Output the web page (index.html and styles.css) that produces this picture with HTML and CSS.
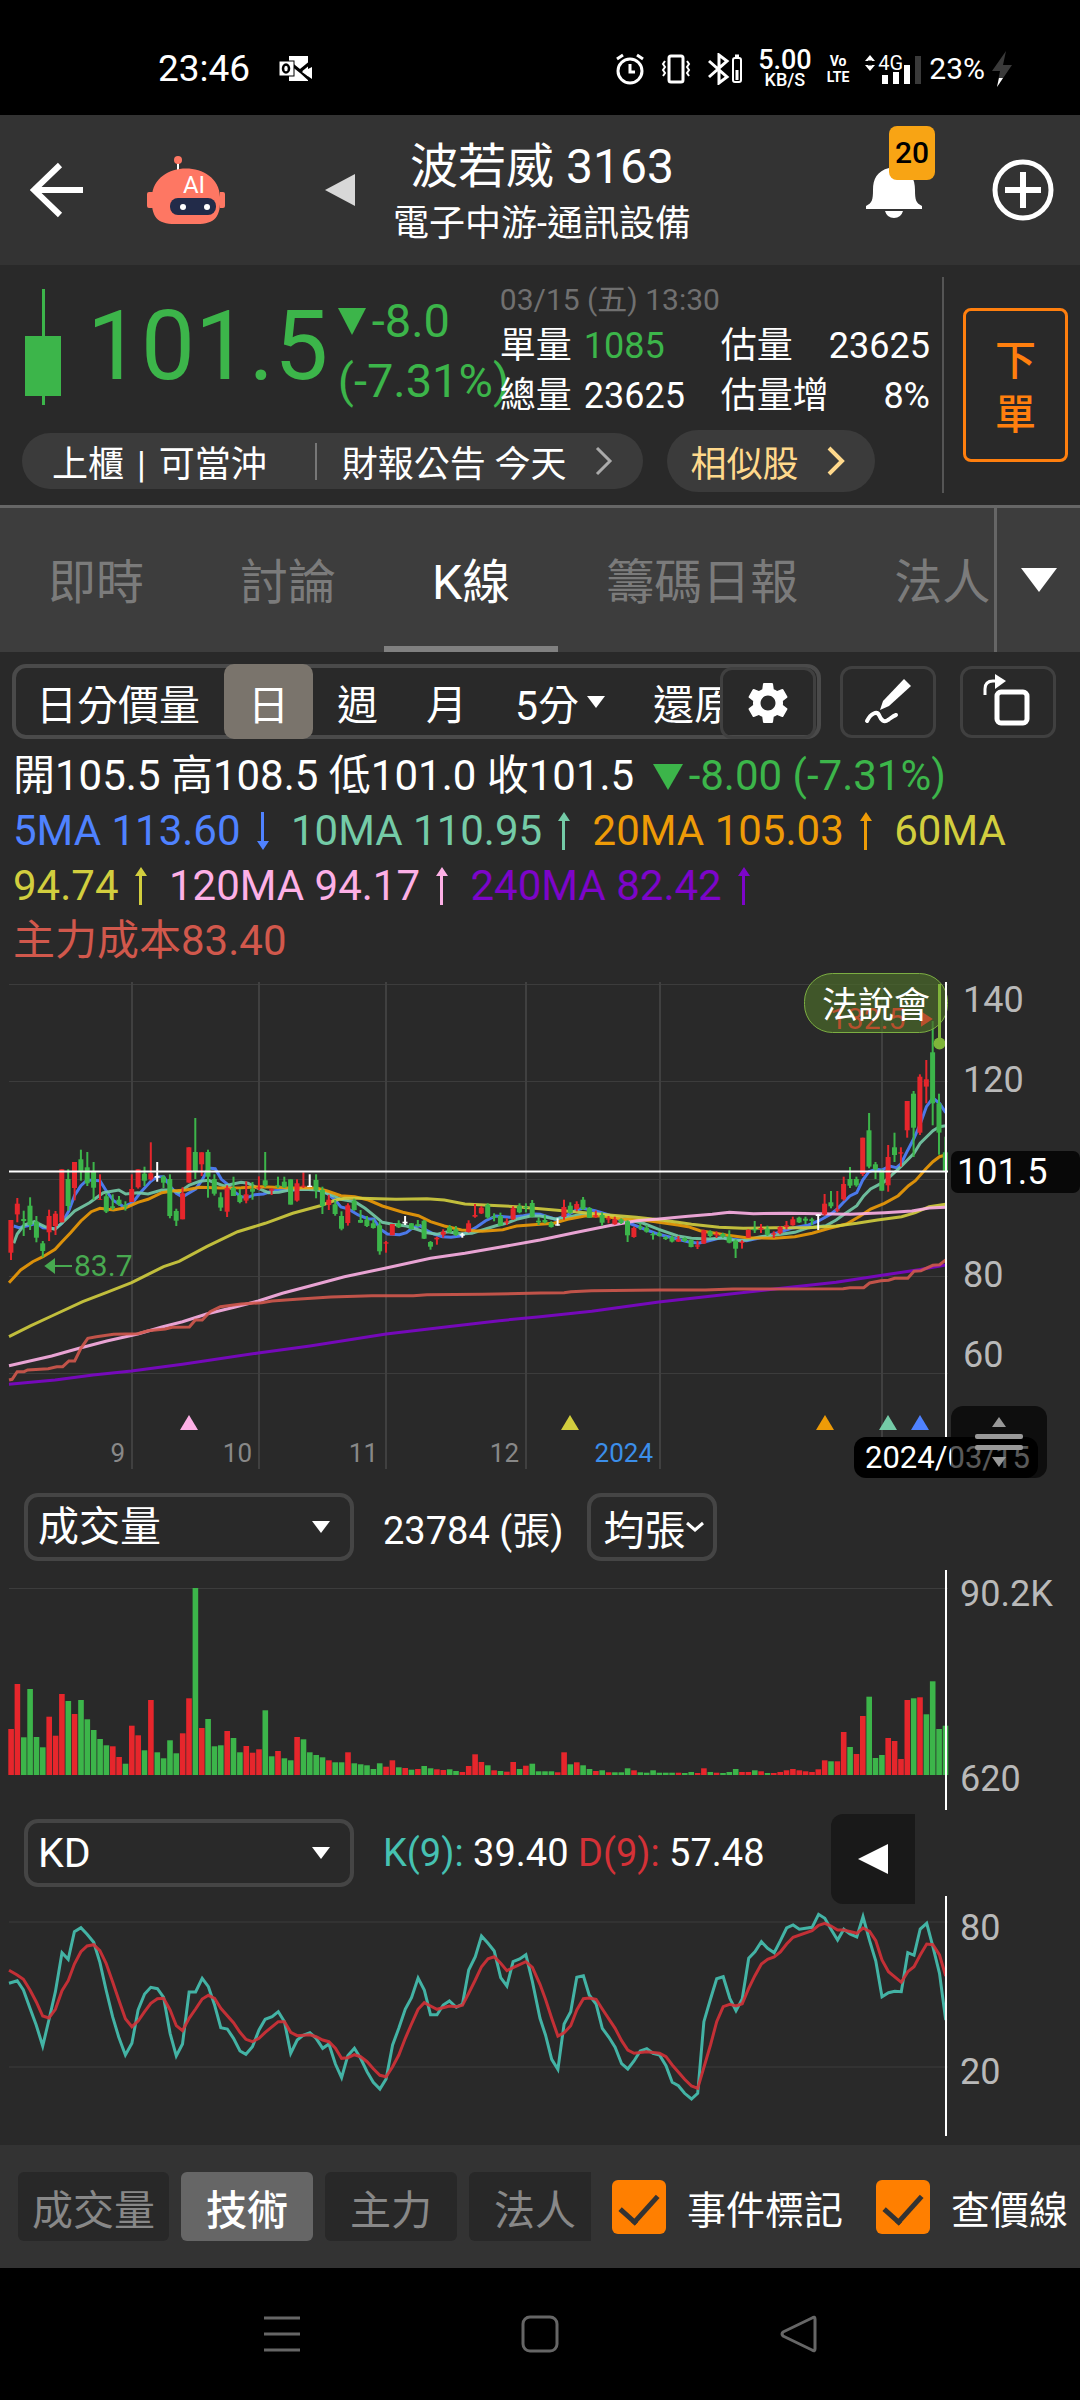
FILE: index.html
```html
<!DOCTYPE html>
<html lang="zh-Hant">
<head>
<meta charset="utf-8">
<meta name="viewport" content="width=device-width, initial-scale=1">
<title>波若威 3163</title>
<link rel="stylesheet" href="styles.css">
</head>
<body>
<div class="status">
  <span class="clock">23:46</span>
  <svg class="mail" width="34" height="28" viewBox="0 0 34 28"><path d="M11 1h19v25H11z" fill="#fff"/><path d="M12 8l10 8 11-9M22 16l11 10" stroke="#000" stroke-width="3" fill="none"/><path d="M34 12v12l-10-7z" fill="#fff"/><rect x="1" y="6" width="15" height="15" fill="#fff" stroke="#000"/><ellipse cx="8" cy="13.500" rx="3" ry="4" fill="none" stroke="#000" stroke-width="2.500"/></svg>
  <div class="status-icons">
    <svg width="30" height="32" viewBox="0 0 30 32" fill="none" stroke="#fff" stroke-width="3"><circle cx="15" cy="18" r="12"/><path d="M15 11v8h5M2 6l6-4M28 6l-6-4"/></svg>
    <svg width="32" height="32" viewBox="0 0 32 32" fill="none" stroke="#fff" stroke-width="3"><rect x="9" y="3" width="14" height="26" rx="2"/><path d="M5 8l-2 3 2 3-2 3 2 3-2 3M27 8l2 3-2 3 2 3-2 3 2 3" stroke-width="2"/></svg>
    <svg width="36" height="32" viewBox="0 0 36 32" fill="none" stroke="#fff" stroke-width="3"><path d="M2 8l18 16-8 6V2l8 6L2 24"/><rect x="26" y="5" width="8" height="24" rx="2" stroke-width="2"/><path d="M28 3h4M30 17v10"/></svg>
    <span class="speed"><b>5.00</b><small>KB/S</small></span>
    <span class="volte"><b>Vo</b><b>LTE</b></span>
    <span class="signal"><svg width="58" height="32" viewBox="0 0 58 32"><path d="M1 8l5-6 5 6zM1 12l5 6 5-6z" fill="#fff"/><path d="M4 8h4M4 12h4" stroke="#000"/><path d="M21 31v-9M32 31V19M43 31V12" stroke="#fff" stroke-width="6"/><path d="M54 31V3" stroke="#3a3a3a" stroke-width="6"/></svg><i>4G</i></span>
    <span class="battery">23%</span>
    <svg width="20" height="36" viewBox="0 0 20 36"><path d="M14 0L0 20h8L5 36 20 14h-9z" fill="#3a3a3a"/><path d="M7 27h4L5 36z" fill="#fff"/></svg>
  </div>
</div>

<header class="header">
  <div class="side">
  <button class="icon-btn back" aria-label="返回"><svg width="54" height="56" viewBox="0 0 54 56" fill="none" stroke="#fff" stroke-width="6"><path d="M53 28H5M30 3L4 28l26 25"/></svg></button>
  <button class="icon-btn robot" aria-label="AI 助理"><svg width="80" height="72" viewBox="0 0 80 72"><path d="M32 8v14" stroke="#fff" stroke-width="2"/><circle cx="32" cy="6" r="4" fill="#fe7763"/><path d="M1 40q0-2 2-2h4v16H3q-2 0-2-2zM79 40q0-2-2-2h-3v16h3q2 0 2-2z" fill="#fe7763"/><path d="M6 43C7 5 73 5 74 43c1 20-5 27-23 27H29C11 70 5 63 6 43z" fill="#fe7763"/><rect x="24" y="44" width="46" height="17" rx="8" fill="#222b49"/><circle cx="37" cy="53" r="3" fill="#fff"/><circle cx="61" cy="53" r="3" fill="#fff"/><text x="48" y="39" text-anchor="middle" font-size="24" fill="#fff">AI</text></svg></button>
  <button class="icon-btn prev" aria-label="上一檔"><svg width="30" height="32" viewBox="0 0 30 32"><path d="M30 0v32L0 16z" fill="#d8d8d8"/></svg></button>
  </div>
  <div class="title"><h1>波若威 3163</h1><p>電子中游-通訊設備</p></div>
  <div class="side right">
  <button class="icon-btn bell" aria-label="通知"><svg width="58" height="56" viewBox="0 0 58 56"><path d="M29 1c3 0 5 2 5 5 12 3 16 11 16 22 0 10 1 13 7 16v3H1v-3c6-3 7-6 7-16C8 17 12 9 24 6c0-3 2-5 5-5zM20 49h18q-2 7-9 7t-9-7z" fill="#fff"/></svg><span class="badge">20</span></button>
  <button class="icon-btn" aria-label="新增"><svg width="62" height="62" viewBox="0 0 62 62" fill="none" stroke="#fff"><circle cx="31" cy="31" r="28" stroke-width="5"/><path d="M31 13v36M13 31h36" stroke-width="6"/></svg></button>
  </div>
</header>

<section class="quote">
  <div class="quote-main">
    <div class="prices">
      <svg class="mini" width="36" height="116" viewBox="0 0 36 116" fill="#3cb54a"><path d="M17 0h3v116h-3zM0 47h36v60H0z"/></svg>
      <strong class="last">101.5</strong>
      <div class="change"><span><svg width="28" height="27" viewBox="0 0 28 27"><path d="M0 0h28L14 27z" fill="#3cb54a"/></svg>-8.0</span><span>(-7.31%)</span></div>
      <div class="info">
        <time>03/15 (五) 13:30</time>
        <dl><dt>單量</dt><dd class="down">1085</dd><dt>估量</dt><dd class="end">23625</dd><dt>總量</dt><dd>23625</dd><dt>估量增</dt><dd class="end">8%</dd></dl>
      </div>
    </div>
    <div class="pills">
      <button class="pill"><span>上櫃 <b>|</b> 可當沖</span><i></i><span>財報公告 今天</span><svg width="18" height="30" viewBox="0 0 18 30" fill="none" stroke="#aaa" stroke-width="3"><path d="M2 2l13 13L2 28"/></svg></button>
      <button class="pill similar"><span>相似股</span><svg width="18" height="30" viewBox="0 0 18 30" fill="none" stroke="#ffd98c" stroke-width="4"><path d="M2 2l13 13L2 28"/></svg></button>
    </div>
  </div>
  <div class="order"><button>下<br>單</button></div>
</section>

<nav class="tabs">
  <div class="tab-list"><a href="#">即時</a><a href="#">討論</a><a href="#" class="on" aria-current="page">K線</a><a href="#">籌碼日報</a><a href="#">法人</a></div>
  <button class="tab-more" aria-label="更多"><svg width="36" height="24" viewBox="0 0 36 24"><path d="M0 0h36L18 24z" fill="#fff"/></svg></button>
</nav>

<div class="toolbar">
  <div class="periods">
    <div class="period-list"><button class="first">日分價量</button><button class="on">日</button><button>週</button><button>月</button><button>5分<svg width="18" height="12" viewBox="0 0 18 12"><path d="M0 0h18L9 12z" fill="#fff"/></svg></button><button>還原</button></div>
    <button class="tool gear" aria-label="設定"><svg width="50" height="50" viewBox="0 0 24 24" fill="#fff"><path d="M19.140 12.940c.040-.300.060-.610.060-.940s-.020-.640-.070-.940l2.030-1.580c.180-.140.230-.410.120-.610l-1.920-3.320c-.120-.220-.370-.290-.590-.220l-2.390.960c-.500-.380-1.030-.700-1.620-.940l-.360-2.540c-.040-.240-.240-.410-.480-.410h-3.840c-.240 0-.430.170-.470.410l-.360 2.540c-.590.240-1.130.570-1.620.940l-2.390-.960c-.220-.080-.470 0-.590.220L2.740 8.870c-.120.210-.080.470.120.610l2.030 1.580c-.050.300-.090.630-.090.940s.020.640.070.940l-2.030 1.580c-.180.140-.230.410-.120.610l1.920 3.320c.120.220.370.290.590.220l2.390-.960c.500.380 1.030.700 1.620.940l.360 2.540c.050.240.240.410.480.410h3.840c.240 0 .440-.170.470-.410l.360-2.540c.590-.240 1.130-.560 1.620-.940l2.390.960c.220.080.470 0 .590-.220l1.920-3.320c.120-.220.070-.470-.120-.610l-2.010-1.580zM12 15.600c-1.980 0-3.600-1.620-3.600-3.600s1.620-3.600 3.600-3.600 3.600 1.620 3.600 3.600-1.620 3.600-3.600 3.600z"/></svg></button>
  </div>
  <button class="tool" aria-label="畫線"><svg width="48" height="48" viewBox="0 0 48 48"><path d="M40 1l7 7-22 20-9 4 3-9z" fill="#fff"/><path d="M3 43c4-8 10-10 12-6 2 5 5 8 9 5 3-2 5-4 8-5" fill="none" stroke="#fff" stroke-width="4" stroke-linecap="round"/></svg></button>
  <button class="tool" aria-label="旋轉"><svg width="50" height="56" viewBox="0 0 50 56" fill="none" stroke="#fff"><rect x="14" y="18" width="30" height="31" rx="4" stroke-width="5"/><path d="M2 21V15q0-8 8-8h4" stroke-width="3"/><path d="M12 0l11 7-11 8z" fill="#fff" stroke="none"/></svg></button>
</div>

<section class="legend">
  <p>開105.5 高108.5 低101.0 收101.5 <span class="down"><svg class="tri" width="30" height="26" viewBox="0 0 30 26"><path d="M0 0h30L15 26z" fill="#3cb54a"/></svg>-8.00 (-7.31%)</span></p>
  <p>
    <span class="ma5">5MA 113.60<svg class="arrow" width="14" height="38" viewBox="0 0 14 38"><path d="M5 0h3v29h5L7 38 1 29h4z"/></svg></span>
    <span class="ma10">10MA 110.95<svg class="arrow" width="14" height="38" viewBox="0 0 14 38"><path d="M5 38h3V9h5L7 0 1 9h4z"/></svg></span>
    <span class="ma20">20MA 105.03<svg class="arrow" width="14" height="38" viewBox="0 0 14 38"><path d="M5 38h3V9h5L7 0 1 9h4z"/></svg></span>
    <span class="ma60">60MA 94.74<svg class="arrow" width="14" height="38" viewBox="0 0 14 38"><path d="M5 38h3V9h5L7 0 1 9h4z"/></svg></span>
    <span class="ma120">120MA 94.17<svg class="arrow" width="14" height="38" viewBox="0 0 14 38"><path d="M5 38h3V9h5L7 0 1 9h4z"/></svg></span>
    <span class="ma240">240MA 82.42<svg class="arrow" width="14" height="38" viewBox="0 0 14 38"><path d="M5 38h3V9h5L7 0 1 9h4z"/></svg></span>
  </p>
  <p class="cost">主力成本83.40</p>
</section>

<section class="panel">
  <svg class="chart" viewBox="0 968 1080 512" role="img" aria-label="K線圖">
    <path class="grid" d="M9 984.500H948M9 1081.500H948M9 1179.500H948M9 1276.500H948M9 1373.500H948"/>
    <path class="grid months" d="M132 982V1469M259 982V1469M386 982V1469M526 982V1469M660 982V1469M882 982V1469"/>
    <g id="lines"></g>
    <g id="candles"></g>
    <path d="M9 1171.500H948" stroke="#fff" stroke-width="2"/>
    <g class="note low"><text x="74" y="1276">83.7</text><path d="M46 1266h26M54 1260l-8 6 8 6z"/></g>
    <rect x="804.500" y="973.500" width="143" height="59" rx="28" fill="#4a6a2a" fill-opacity=".7" stroke="#7cae42"/>
    <g class="note high"><text x="830" y="1029">132.5</text><path d="M903 1019h26M922 1013l9 6-9 6z"/></g>
    <path d="M939.500 984v60" stroke="#7fb53a" stroke-width="3"/><circle cx="939.500" cy="1043.500" r="6" fill="#7fb53a"/>
    <text class="event" x="876" y="1018" text-anchor="middle">法說會</text>
    <path d="M946 982V1437" stroke="#fff" stroke-width="2"/>
    <g><path fill="#fdb0e6" d="M189 1415l9 15h-18z"/><path fill="#d2ce3e" d="M570 1415l9 15h-18z"/><path fill="#ee9b07" d="M825 1415l9 15h-18z"/><path fill="#74cba7" d="M888 1415l9 15h-18z"/><path fill="#4f82ff" d="M920 1415l9 15h-18z"/></g>
    <g class="month" text-anchor="end"><text x="125" y="1462">9</text><text x="252" y="1462">10</text><text x="378" y="1462">11</text><text x="519" y="1462">12</text><text class="year" x="653" y="1462">2024</text></g>
    <g class="axis"><text x="963" y="1012">140</text><text x="963" y="1092">120</text><text x="963" y="1287">80</text><text x="963" y="1367">60</text></g>
    <rect x="951" y="1151" width="129" height="42" rx="7" fill="#080808"/><text class="tag" x="957" y="1184">101.5</text>
    <rect x="854" y="1437" width="184" height="41" rx="12" fill="#000"/><text class="date" x="865" y="1468">2024/03/15</text>
  </svg>
  <button class="resize" aria-label="調整高度"><svg width="48" height="50" viewBox="0 0 48 50" fill="#989898"><path d="M24 0l7 10H17zM24 50l7-10H17z"/><rect y="17" width="48" height="5" rx="2"/><rect y="28" width="48" height="5" rx="2"/></svg></button>
</section>

<section>
  <div class="indicator vol">
    <label class="pick"><select aria-label="副圖一"><option>成交量</option></select><svg width="18" height="12" viewBox="0 0 18 12"><path d="M0 0h18L9 12z" fill="#fff"/></svg></label>
    <span class="value">23784 (張)</span>
    <button class="avg">均張<svg width="20" height="12" viewBox="0 0 20 12" fill="none" stroke="#fff" stroke-width="3"><path d="M2 2l8 7 8-7"/></svg></button>
  </div>
  <svg class="chart" viewBox="0 1565 1080 245" role="img" aria-label="成交量">
    <path class="grid" d="M9 1588.500H948"/>
    <g id="volumes"></g>
    <path d="M946 1570V1810" stroke="#fff" stroke-width="2"/>
    <g class="axis"><text x="960" y="1606">90.2K</text><text x="960" y="1791">620</text></g>
  </svg>
</section>

<section>
  <div class="indicator kd">
    <label class="pick"><select aria-label="副圖二"><option>KD</option></select><svg width="18" height="12" viewBox="0 0 18 12"><path d="M0 0h18L9 12z" fill="#fff"/></svg></label>
    <span class="value"><span class="k">K(9):</span> 39.40 <span class="d">D(9):</span> 57.48</span>
    <button class="drawer" aria-label="展開"><svg width="30" height="30" viewBox="0 0 30 30"><path d="M30 0v30L0 15z" fill="#fff"/></svg></button>
  </div>
  <svg class="chart" viewBox="0 1896 1080 249" role="img" aria-label="KD">
    <path class="grid" d="M9 1922H948M9 2067H948"/>
    <g id="kd"></g>
    <path d="M946 1896V2136" stroke="#fff" stroke-width="2"/>
    <g class="axis"><text x="960" y="1940">80</text><text x="960" y="2084">20</text></g>
  </svg>
</section>

<footer class="bottom">
  <div class="groups"><button>成交量</button><button class="on">技術</button><button>主力</button><button>法人</button></div>
  <label><input type="checkbox" checked>事件標記</label>
  <label><input type="checkbox" checked>查價線</label>
</footer>

<div class="system">
  <button aria-label="最近"><svg width="38" height="38" viewBox="0 0 38 38" fill="none" stroke="#666" stroke-width="3"><path d="M1 3h36M1 19h36M1 35h36"/></svg></button>
  <button aria-label="主畫面"><svg width="38" height="38" viewBox="0 0 38 38" fill="none" stroke="#666" stroke-width="3"><rect x="2" y="2" width="34" height="34" rx="7"/></svg></button>
  <button aria-label="返回"><svg width="38" height="38" viewBox="0 0 38 38" fill="none" stroke="#666" stroke-width="3" stroke-linejoin="round"><path d="M36 4v30q0 3-3 1L4 21q-2-2 0-4L33 3q3-2 3 1z"/></svg></button>
</div>
<script src="chart.js"></script>
</body>
</html>
```
FILE: styles.css
```css
* { box-sizing: border-box; }
body {
  margin: 0;
  background: #292929;
  color: #fff;
  font-family: Roboto, "Noto Sans CJK TC", sans-serif;
  font-size: 36px;
}
h1, p, dl, dd { margin: 0; font-weight: 400; }
button, select {
  font: inherit;
  color: inherit;
  background: none;
  border: 0;
  padding: 0;
  margin: 0;
}
svg { display: block; flex: none; }
.down { color: #3cb54a; }

.status {
  display: flex;
  align-items: center;
  height: 115px;
  padding: 22px 68px 0 158px;
  background: #000;
}
.clock { font-size: 37px; }
.mail { margin-left: 28px; }
.status-icons { display: flex; align-items: center; gap: 15px; margin-left: auto; }
.speed, .volte { display: flex; flex-direction: column; align-items: center; line-height: 18px; font-weight: 500; }
.speed b { font-size: 27px; line-height: 22px; font-weight: 500; }
.speed small { font-size: 18px; }
.volte b { font-size: 14px; line-height: 16px; font-weight: 700; }
.signal { position: relative; }
.signal i { position: absolute; left: 14px; top: 0; font-size: 20px; line-height: 20px; font-style: normal; }
.battery { font-size: 30px; margin: 0 -8px; }

.header {
  display: grid;
  grid-template-columns: 1fr auto 1fr;
  align-items: center;
  height: 150px;
  padding: 0 26px 0 30px;
  background: #333;
}
.side { display: flex; align-items: center; }
.right { justify-content: flex-end; }
.icon-btn { flex: none; position: relative; }
.robot { margin-left: 62px; }
.prev { margin-left: 99px; }
.title { padding-top: 8px; text-align: center; }
.title h1 { font-size: 48px; line-height: 60px; }
.title p { font-size: 36px; line-height: 54px; }
.bell { margin-right: 69px; }
.badge {
  position: absolute;
  left: 24px;
  bottom: 38px;
  width: 46px;
  height: 54px;
  border-radius: 8px;
  background: #f8a414;
  color: #000;
  font-size: 30px;
  font-weight: 500;
  line-height: 54px;
}

.quote { display: flex; height: 243px; border-bottom: 3px solid #666; }
.quote-main { flex: 1; min-width: 0; padding: 14px 12px 0 22px; }
.prices { display: flex; height: 151px; }
.mini { margin: 10px 0 0 3px; }
.last { font-size: 96px; line-height: 112px; font-weight: 400; color: #3cb54a; margin: 11px 0 0 26px; width: 257px; }
.change { width: 162px; padding-top: 12px; color: #3cb54a; font-size: 47px; line-height: 60px; white-space: nowrap; }
.change span { display: flex; align-items: center; gap: 6px; }
.info { flex: 1; }
.info time { display: block; font-size: 30px; line-height: 42px; color: #707070; }
.info dl { display: grid; grid-template-columns: 84px 137px auto 1fr; line-height: 50px; white-space: nowrap; }
.info .end { text-align: right; }
.pills { display: flex; align-items: center; gap: 24px; }
.pill { display: flex; align-items: center; height: 56px; padding: 0 30px; border-radius: 28px; background: #3b3b3b; white-space: nowrap; }
.pill b { font-weight: 400; margin: 0 4px; }
.pill i { width: 2px; height: 37px; margin: 0 25px 0 48px; background: #777; }
.pill svg { margin-left: 28px; }
.similar { height: 62px; padding: 0 30px 0 24px; border-radius: 31px; color: #ffd98c; }
.order { margin: 12px 0; padding: 31px 12px 0 19px; border-left: 2px solid #555; }
.order button { width: 105px; height: 154px; padding-top: 6px; border: 3px solid #ff7f0e; border-radius: 8px; color: #ff7f0e; font-size: 41px; line-height: 54px; font-weight: 500; }

.tabs { display: flex; height: 144px; background: #3d3d3d; }
.tab-list { flex: 1; display: flex; overflow: hidden; min-width: 0; }
.tab-list a { flex: none; padding: 6px 48px 0; line-height: 138px; font-size: 48px; color: #7b7b7b; text-decoration: none; }
.tab-list .on { color: #fff; border-bottom: 6px solid #808080; }
.tab-more { width: 86px; display: flex; justify-content: center; align-items: center; border-left: 3px solid #666; }

.toolbar { display: flex; align-items: center; gap: 24px; padding: 12px 24px 9px 12px; }
.periods { flex: 1; min-width: 0; display: flex; position: relative; height: 75px; border: 4px solid #4a4a4a; border-radius: 14px; margin-right: -5px; }
.period-list { flex: 1; min-width: 0; display: flex; overflow: hidden; font-size: 41px; margin: -4px 0; }
.period-list button { flex: none; display: flex; align-items: center; gap: 8px; padding: 0 24px; }
.period-list .first { padding-left: 20px; }
.period-list .on { background: #7a746c; border-radius: 10px; }
.tool { flex: none; width: 96px; height: 72px; display: flex; justify-content: center; align-items: center; border: 3px solid #404040; border-radius: 12px; }
.gear { margin: -1px 1px 0 0; }

.legend { padding: 0 12px 0 13px; font-size: 42px; line-height: 55px; }
.legend svg { display: inline-block; }
.tri { margin: 0 6px 0 8px; }
.arrow { margin: 0 11px 0 15px; vertical-align: -5px; fill: currentColor; }
.ma5 { color: #4f82ff; }
.ma10 { color: #74cba7; }
.ma20 { color: #ee9b07; }
.ma60 { color: #d2ce3e; }
.ma120 { color: #fdb0e6; }
.ma240 { color: #7d05c9; }
.cost { color: #d1584c; }

.panel { position: relative; }
.chart { width: 100%; height: auto; }
.grid { stroke: #3c3c3c; fill: none; }
.months { stroke: #404040; stroke-width: 2; }
.axis { fill: #b9b9b9; font-size: 36px; }
.month { fill: #888; font-size: 26px; }
.month .year { fill: #3b8eea; }
.tag, .event { fill: #fff; font-size: 36px; }
.date { fill: #fff; font-size: 31px; }
.note { font-size: 30px; stroke-width: 2; }
.low text, .low path { fill: #48a950; }
.high text, .high path { fill: #b9502d; }
.low path { stroke: #48a950; }
.high path { stroke: #b9502d; }
.resize { position: absolute; right: 33px; bottom: 2px; width: 96px; height: 72px; display: flex; justify-content: center; align-items: center; border-radius: 12px; background: rgb(0 0 0 / 65%); }
.line { fill: none; stroke-width: 3; stroke-opacity: .9; }
.r { fill: #e6262c; }
.g { fill: #3cb54a; }
.w { fill: #fff; }

.indicator { position: relative; display: flex; align-items: center; padding: 13px 24px 4px; }
.kd { padding: 9px 24px; }
.pick { position: relative; flex: none; width: 330px; }
.pick select { appearance: none; display: block; width: 100%; height: 68px; padding: 0 10px; border: 4px solid #454545; border-radius: 14px; font-size: 41px; }
.pick svg { position: absolute; right: 24px; top: 28px; pointer-events: none; }
.value { font-size: 38px; margin-left: 29px; }
.k { color: #46c2b2; }
.d { color: #d43137; }
.avg { display: flex; align-items: center; height: 68px; margin-left: 24px; padding: 0 8px 0 12px; border: 4px solid #454545; border-radius: 14px; font-size: 41px; }
.drawer { position: absolute; right: 165px; top: 4px; width: 84px; height: 90px; display: flex; justify-content: center; align-items: center; background: #191919; border-radius: 12px 0 0 12px; }

.bottom { display: flex; align-items: center; height: 123px; padding: 0 12px 0 18px; background: #333; }
.groups { flex: 1; min-width: 0; display: flex; gap: 12px; overflow: hidden; margin-right: 21px; font-size: 41px; }
.groups button { flex: none; min-width: 132px; height: 69px; padding: 0 14px; border-radius: 6px; background: #282828; color: #888; }
.groups .on { background: #666; color: #fff; font-weight: 500; }
.bottom label { flex: none; display: flex; align-items: center; gap: 21px; font-size: 39px; margin-left: 33px; }
.bottom .groups + label { margin-left: 0; }
.bottom input {
  appearance: none;
  width: 54px;
  height: 54px;
  margin: 0;
  border-radius: 6px;
  background: #ff7f00;
  display: flex;
  justify-content: center;
}
.bottom input::after { content: ""; width: 17px; height: 32px; margin-top: 6px; border: solid #333; border-width: 0 5px 5px 0; rotate: 42deg; }

.system { display: flex; height: 132px; align-items: center; justify-content: space-between; padding: 0 263px; background: #000; }
```
FILE: chart.js
```js
// Sample units: 1568 horizontal units per 540 user units, 3 vertical units per user unit.
const STEP = 18.457;
const X = v => (v * 540 / 1568).toFixed(1);
const Y = (v, base) => (base + v / 3).toFixed(1);
const NS = 'http://www.w3.org/2000/svg';

function add(parent, tag, attrs) {
  const el = document.createElementNS(NS, tag);
  for (const k in attrs) el.setAttribute(k, attrs[k]);
  document.getElementById(parent).appendChild(el);
}

// Two halves of a series; the second half starts 1568 units in.
function line(parent, base, color, first, second) {
  const parse = (s, dx) => s.trim().split(/\s+/).map(p => {
    const [x, y] = p.split(',').map(Number);
    return X(x + dx) + ',' + Y(y, base);
  });
  add(parent, 'polyline', {
    class: 'line', stroke: color,
    points: parse(first, 0).concat(parse(second, 1568)).join(' ')
  });
}

line('lines', 960, '#4f82ff',
  '40,798 55,803 80,797 105,790 125,803 160,806 180,790 200,752 217,706 235,677 253,660 290,662 310,695 330,722 360,740 385,728 410,695 438,664 456,650 475,650 495,680 512,700 530,711 550,698 568,687 587,660 605,624 625,626 643,658 660,672 680,695 700,710 720,712 740,704 765,702 790,693 820,690 850,690 880,686 905,687 925,690 950,700 975,722 990,741 1010,746 1040,765 1070,777 1085,777 1105,808 1125,822 1160,824 1180,818 1200,802 1220,797 1240,812 1260,822 1285,830 1310,832 1335,828 1360,815 1385,800 1410,782 1440,768 1480,772 1520,767 1550,762',
  '0,763 45,778 80,765 105,750 125,745 160,752 200,765 235,780 265,792 310,810 345,823 400,838 430,845 460,850 490,842 530,832 560,838 600,842 640,833 690,818 730,805 780,795 810,782 845,762 865,745 880,728 900,708 920,698 937,660 955,635 975,628 993,630 1015,618 1035,623 1048,612 1067,572 1086,535 1104,492 1122,440 1141,414 1160,430 1178,458');
line('lines', 960, '#74cba7',
  '40,850 50,822 70,795 100,785 130,800 160,808 190,780 217,753 260,728 300,698 345,690 365,702 400,698 430,702 470,690 500,690 520,697 550,675 580,664 605,661 650,678 700,667 720,670 750,685 780,698 810,697 840,690 880,688 925,690 970,708 990,718 1030,725 1060,745 1090,770 1110,787 1140,793 1180,798 1210,808 1240,818 1270,823 1300,815 1340,822 1370,820 1410,807 1440,797 1470,790 1500,778 1540,768',
  '0,768 45,777 80,772 120,763 160,762 220,772 260,780 300,790 345,808 400,828 440,835 490,837 530,834 570,842 600,840 640,830 700,823 740,817 780,803 830,797 860,780 880,765 920,737 940,708 960,687 1000,665 1050,618 1086,580 1104,550 1141,512 1160,500 1178,497');
line('lines', 960, '#ee9b07',
  '26,968 60,930 95,905 125,890 160,868 180,845 205,818 235,783 265,755 290,745 330,750 365,743 400,727 430,718 470,698 500,693 540,690 580,682 640,684 700,683 760,680 830,683 920,684 950,693 990,707 1030,710 1070,720 1110,738 1170,757 1215,767 1250,785 1290,798 1340,810 1400,814 1460,809 1500,798',
  '0,793 40,790 80,778 130,768 180,768 240,778 300,780 345,787 400,795 430,800 465,812 500,818 540,825 600,833 680,835 740,830 790,820 840,805 890,792 930,768 960,747 1000,730 1040,707 1070,677 1090,662 1120,627 1141,605 1160,590 1178,585');
line('lines', 960, '#d2ce3e',
  '26,1130 90,1097 150,1068 240,1025 310,997 382,968 430,943 475,920 520,904 600,860 690,815 770,790 850,760 930,737 975,720 1000,715 1050,715 1150,718 1240,716 1290,720 1350,732 1420,736 1500,740',
  '0,746 100,755 200,765 280,772 345,779 400,787 440,793 520,802 590,805 680,803 780,803 860,798 920,790 980,780 1050,770 1090,758 1130,740 1178,733');
line('lines', 960, '#7d05c9',
  '26,1273 160,1260 270,1245 382,1233 530,1213 750,1179 900,1158 1121,1122 1300,1100 1450,1082',
  '0,1070 150,1054 345,1026 500,1008 700,985 860,967 993,946 1100,929 1178,915');
line('lines', 960, '#fdb0e6',
  '26,1217 150,1188 230,1165 310,1143 400,1122 470,1101 530,1085 600,1062 680,1042 750,1023 820,1000 900,978 1000,950 1121,924 1250,895 1350,880 1450,862',
  '0,840 100,818 200,797 280,782 345,777 430,769 500,763 550,757 620,761 720,760 900,763 1000,758 1080,753 1130,744 1178,742');
line('lines', 960, '#d1584c',
  '26,1260 35,1258 50,1235 70,1235 80,1230 140,1226 165,1220 182,1220 200,1203 217,1203 235,1165 255,1135 280,1130 330,1123 400,1121 430,1112 480,1107 500,1102 550,1101 567,1080 587,1080 610,1055 640,1040 700,1032 760,1028 790,1023 860,1018 960,1011 1080,1007 1200,1007 1240,1004 1400,1003',
  '0,999 70,998 90,995 150,992 345,990 480,990 560,987 880,986 900,983 940,983 957,969 990,962 1012,961 1030,955 1068,955 1086,934 1106,932 1141,916 1160,914 1178,900');

// Colour, high, body top, body bottom, low
const candles = `r 780 780 878 900|r 714 731 763 787|g 752 777 783 828|g 712 737 795 810|g 768 785 833 847|g 843 850 873 892|r 749 768 817 843|r 753 761 798 825|r 628 628 787 787|g 628 657 738 752|r 606 606 684 721|g 569 598 633 662|g 576 622 670 678|g 606 635 683 720|r 643 717 719 719|g 700 709 755 759|g 703 739 744 750|g 708 719 733 737|g 724 736 740 752|r 643 687 726 726|r 628 628 682 686|g 620 641 662 678|r 547 640 658 662|w 606 648 653 665|g 646 650 668 684|g 643 657 768 775|g 746 753 782 798|r 682 700 778 778|r 562 562 668 668|g 474 576 635 657|r 577 577 613 648|g 569 576 650 713|g 643 657 701 707|g 697 712 743 753|r 676 684 755 771|g 650 684 708 708|g 687 706 726 730|r 664 703 722 730|g 666 687 695 719|r 649 682 686 690|g 576 661 676 682|r 684 688 692 705|g 650 676 680 684|g 650 665 682 684|g 658 658 734 734|r 658 670 722 725|r 637 677 680 684|w 643 677 681 681|g 643 660 692 715|g 680 690 738 762|r 704 719 735 750|g 720 733 762 767|g 754 768 806 811|r 730 736 789 797|g 716 722 750 752|g 750 780 788 789|g 768 779 798 801|g 778 790 804 806|g 786 796 874 884|r 843 847 851 878|r 792 792 826 826|g 781 790 802 804|w 768 785 790 795|g 789 790 807 809|g 780 793 798 800|g 780 782 836 837|g 843 846 860 869|r 830 833 838 854|r 808 815 824 833|g 795 802 817 818|g 798 808 825 828|w 818 823 827 833|r 781 790 816 818|r 732 765 770 773|r 738 743 760 762|g 730 734 772 776|g 760 770 774 784|g 758 768 797 798|r 775 784 788 795|r 739 745 778 780|g 730 738 757 760|g 730 740 744 757|g 720 729 770 772|g 772 782 787 795|g 764 780 787 790|g 784 788 801 803|w 775 793 797 797|r 719 741 771 779|g 727 737 758 762|r 724 732 747 754|g 711 719 747 750|g 741 744 773 774|r 752 766 770 774|g 757 765 788 797|r 768 775 779 790|r 770 778 793 794|g 775 778 789 792|g 781 784 826 846|r 800 804 831 833|g 790 800 804 810|g 795 803 815 818|g 817 822 826 839|g 814 820 828 830|g 828 832 837 840|g 827 832 845 847|r 828 838 845 846|g 832 834 843 846|g 838 840 861 862|r 842 856 860 867|r 809 811 851 852|g 811 814 828 833|r 814 822 826 834|g 818 822 830 833|g 811 830 848 850|g 838 842 866 894|r 841 845 849 866|r 808 810 833 834|g 783 807 811 819|r 792 804 808 819|g 797 806 824 828|r 814 820 824 834|r 798 801 820 823|r 783 796 801 808|r 770 778 796 797|g 770 773 787 789|g 770 776 782 792|g 773 778 783 795|w 763 763 768 810|r 702 731 763 766|g 693 727 739 745|r 693 748 752 756|r 650 672 718 722|g 621 657 677 684|g 650 657 676 680|r 533 533 642 648|g 459 511 620 625|g 606 613 628 657|g 628 633 692 692|r 555 591 676 695|g 518 562 585 606|r 562 577 581 620|r 423 423 511 533|g 393 401 503 591|r 343 350 518 525|r 300 358 380 430|g 183 277 430 496|g 401 430 518 584|g 530 577 635 635`;
candles.split('|').forEach((row, i) => {
  const [c, ...v] = row.split(' ');
  const [hi, top, bottom, lo] = v.map(Number);
  const x = 32 + i * STEP;
  add('candles', 'rect', { class: c, x: X(x - 3), width: 2, y: Y(hi, 960), height: ((lo - hi) / 3).toFixed(1) });
  add('candles', 'rect', { class: c, x: X(x - 7.5), width: 5, y: Y(top, 960), height: ((bottom - top) / 3).toFixed(1) });
});

const volumes = 'r747 r612 g772 g627 g771 g802 r710 r767 r642 g663 r702 g660 g718 g750 g777 g796 r799 r831 g851 r737 r766 g811 r660 g817 g835 g781 g820 r760 r655 g324 r744 g717 g799 g796 r753 g774 g817 r798 r818 r808 g691 g829 r813 g835 g841 r771 g778 g817 g825 g832 r841 g847 g847 r817 g850 g853 g856 g867 g850 r860 r841 g862 r864 g869 r867 g858 g865 r868 r870 g868 g873 r876 r858 r823 r846 g856 r871 g873 r875 r846 g867 r857 g851 g874 g874 g874 r877 r817 g853 r847 g856 g867 r873 g871 r877 g877 g877 g865 r871 g877 g878 g871 g878 g878 g878 r878 g879 g876 r879 r865 g876 r878 g879 g876 g867 r876 r876 g871 r874 g879 r879 r876 r871 r867 r871 r874 r876 r868 r841 g844 r844 r756 g801 r822 r708 g650 g834 g825 r774 r783 r837 r660 g655 r652 g703 g604 g747 g737';
volumes.split(' ').forEach((s, i) => {
  const top = Number(s.slice(1));
  add('volumes', 'rect', { class: s[0], x: X(24 + i * STEP), width: 5.6, y: Y(top, 1480), height: ((885 - top) / 3).toFixed(1) });
});

line('kd', 1800, '#46c2b2',
  '26,550 50,542 68,570 87,625 105,675 124,738 142,660 161,575 180,458 198,478 216,395 235,383 253,403 272,427 290,487 308,570 327,650 345,712 364,765 383,730 401,630 420,582 438,562 457,566 475,592 494,700 512,768 530,732 549,576 568,576 587,535 605,560 623,615 641,683 660,687 678,715 697,753 714,763 733,740 752,690 770,658 790,650 808,635 826,665 844,760 863,720 880,706 900,698 918,715 937,745 955,732 974,792 992,833 1010,767 1029,745 1047,775 1066,815 1084,847 1103,867 1121,837 1140,735 1158,685 1177,627 1195,593 1214,534 1232,570 1250,644 1269,644 1287,615 1305,603 1325,622 1343,612 1361,510 1380,470 1398,408 1417,430 1435,453 1454,533 1472,558 1490,485 1509,477 1527,464 1546,545',
  '0,655 16,705 34,778 52,808 70,672 89,635 107,532 126,527 143,585 163,612 181,685 200,712 218,742 237,791 255,807 273,783 291,753 310,746 328,760 347,765 366,797 384,847 402,857 420,880 440,897 458,880 476,665 495,597 513,536 532,530 551,595 569,632 587,597 606,475 624,455 643,425 661,445 680,458 698,422 716,384 735,375 753,388 790,382 809,343 827,355 845,388 864,420 882,388 900,402 920,411 938,350 957,422 975,483 993,590 1012,578 1030,574 1049,575 1068,458 1086,466 1104,387 1123,370 1141,440 1160,520 1178,660');
line('kd', 1800, '#d43137',
  '26,511 50,525 68,538 87,570 105,605 124,648 142,654 161,628 180,572 198,542 216,492 235,455 253,438 272,434 290,452 308,490 327,545 345,600 364,656 383,680 401,663 420,635 438,610 457,596 475,595 494,630 512,677 530,692 549,655 568,627 587,597 605,586 623,595 641,625 678,668 697,697 714,718 733,725 752,715 770,697 808,665 826,665 844,697 863,707 900,704 918,710 937,720 955,725 974,745 992,775 1010,773 1029,764 1047,770 1066,785 1084,806 1103,826 1121,830 1140,800 1158,765 1177,715 1195,672 1214,628 1232,608 1250,618 1269,628 1305,618 1325,620 1343,616 1361,580 1380,540 1398,500 1417,476 1435,470 1454,490 1472,512 1490,503 1527,485 1546,502',
  '0,553 16,598 34,655 52,708 70,698 89,677 107,630 126,596 143,594 163,598 181,627 218,685 237,722 255,750 273,760 310,755 347,760 366,770 384,795 420,838 440,858 458,865 476,802 495,735 513,665 532,620 551,613 569,618 587,611 606,565 624,527 643,492 661,478 680,471 698,456 716,432 735,412 790,392 809,376 827,370 845,378 864,390 882,390 920,400 938,384 957,394 975,422 993,480 1012,515 1049,547 1068,515 1086,500 1104,465 1123,432 1141,434 1160,465 1178,528');
```
